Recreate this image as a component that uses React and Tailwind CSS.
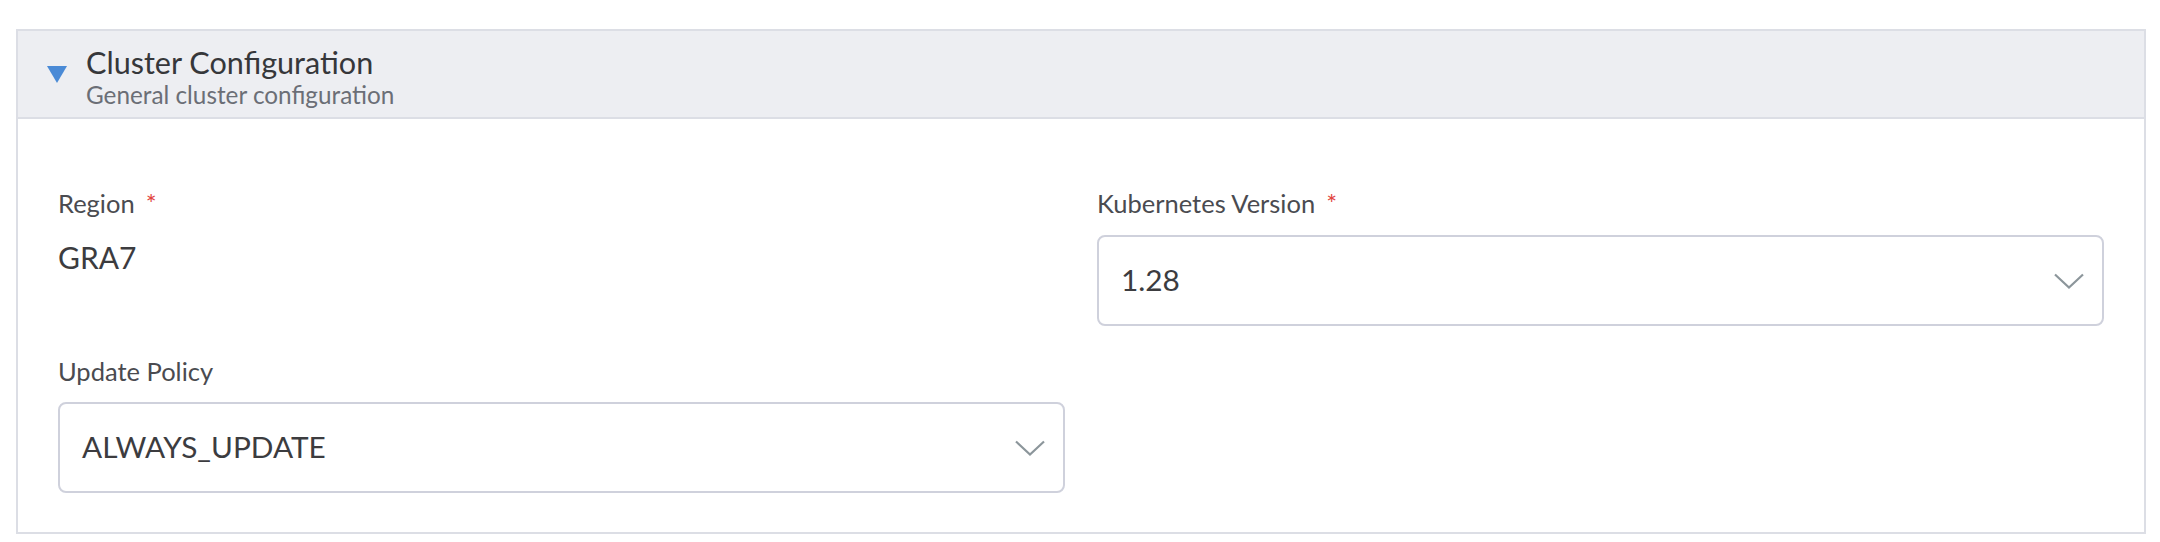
import React from 'react'

const Chevron = () => (
	<svg width="30" height="16" viewBox="0 0 30 16" fill="none">
		<path d="M1 1.5 L15 14.5 L29 1.5" stroke="#8c969b" strokeWidth="2.2" />
	</svg>
)

const Label = ({ text, required }) => (
	<div className="flex items-start text-[25.5px] leading-[30px] text-[#4a4b50]">
		<span>{text}</span>
		{required && <span className="ml-[11px] text-[#e2463f]">*</span>}
	</div>
)

const SelectBox = ({ value }) => (
	<div className="flex h-[91px] items-center justify-between rounded-[8px] border-2 border-[#cfd1dc] bg-white pl-[22px] pr-[18px]">
		<span className="text-[29.8px] text-[#3c3c3f]">{value}</span>
		<Chevron />
	</div>
)

export default function App() {
	return (
		<div className="min-h-screen bg-white pt-[29px] pl-[16px] pr-[14px] font-['Lato',sans-serif]">
			<div className="border-2 border-[#dcdee5]">
				{/* header */}
				<div className="flex items-center border-b-2 border-[#dcdee5] bg-[#edeef2] pt-[14px] pb-[8px] pl-[29px]">
					<svg width="20" height="17" viewBox="0 0 20 17" className="mt-[-6px]">
						<path d="M0 0 L20 0 L10 17 Z" fill="#4a8ad6" />
					</svg>
					<div className="ml-[19px]">
						<div className="text-[30.6px] leading-[36px] text-[#36373a]">Cluster Configuration</div>
						<div className="text-[24.3px] leading-[28px] text-[#6b6e76]">General cluster configuration</div>
					</div>
				</div>

				{/* body */}
				<div className="grid grid-cols-2 gap-x-[32px] px-[40px] pt-[69px] pb-[39px]">
					<div>
						<Label text="Region" required />
						<div className="mt-[21px] text-[30px] leading-[36px] text-[#3c3c3f]">GRA7</div>
					</div>
					<div>
						<Label text="Kubernetes Version" required />
						<div className="mt-[17px]">
							<SelectBox value="1.28" />
						</div>
					</div>
					<div className="mt-[30px]">
						<Label text="Update Policy" />
						<div className="mt-[16px]">
							<SelectBox value="ALWAYS_UPDATE" />
						</div>
					</div>
				</div>
			</div>
		</div>
	)
}
